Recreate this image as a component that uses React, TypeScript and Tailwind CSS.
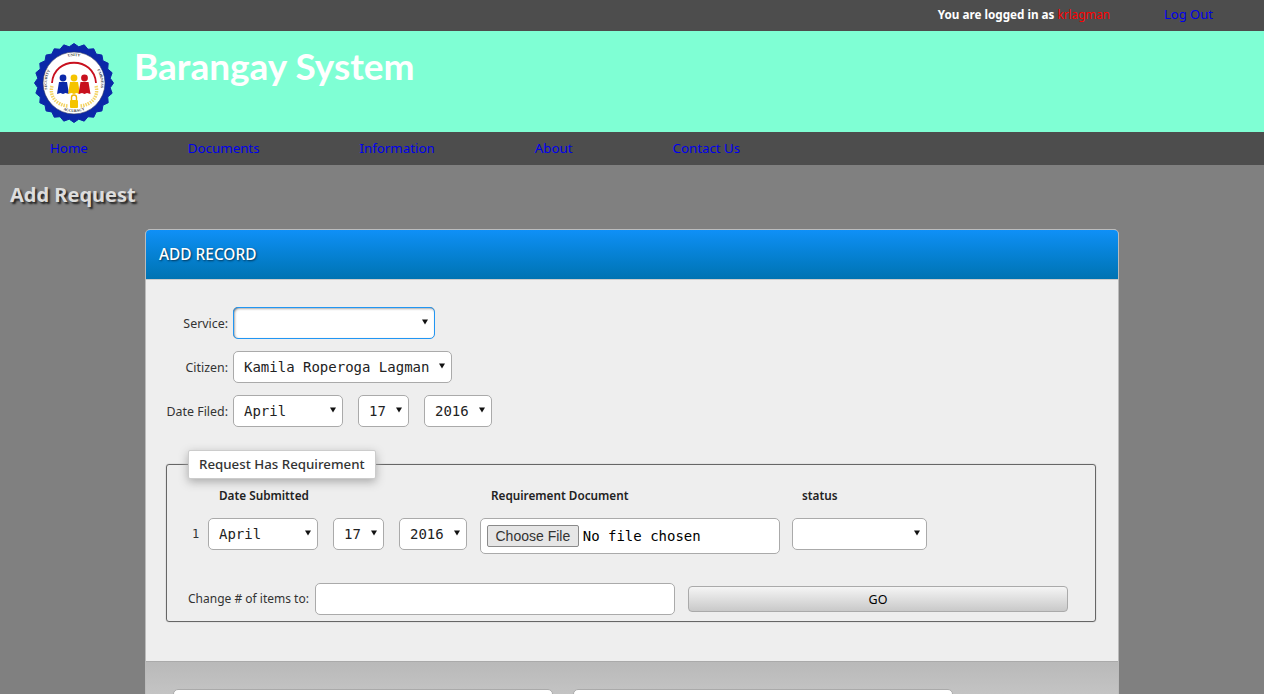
const NAV_LINKS = ["Home", "Documents", "Information", "About", "Contact Us"];
const MONTHS = ["April"];

// scalloped edge of the seal
const sealEdge = (() => {
  const points: string[] = [];
  const bumps = 24;
  for (let i = 0; i < bumps * 2; i++) {
    const angle = (i / (bumps * 2)) * Math.PI * 2;
    const r = i % 2 === 0 ? 39.5 : 36.5;
    points.push(`${(41 + r * Math.cos(angle)).toFixed(2)},${(40 + r * Math.sin(angle)).toFixed(2)}`);
  }
  return points.join(" ");
})();

const Seal = () => (
  <svg width="82" height="82" viewBox="0 0 82 80" className="block">
    <polygon points={sealEdge} fill="#0b28a8" stroke="#0b28a8" strokeWidth="1" strokeLinejoin="round" />
    <circle cx="41" cy="40" r="31" fill="#fff" stroke="#30395f" strokeWidth="0.6" />
    <defs>
      <path id="sealTop" d="M14 40a27 27 0 0 1 54 0" />
      <path id="sealBottom" d="M12 40a29 29 0 0 0 58 0" />
      <path id="sealLeft" d="M20 58a27 27 0 0 1 6-40" />
      <path id="sealRight" d="M56 18a27 27 0 0 1 7 38" />
    </defs>
    <g fontFamily="'Liberation Serif', serif" fontSize="3.800" fontWeight="700" fill="#333">
      <text><textPath href="#sealTop" startOffset="50%" textAnchor="middle">UNITY</textPath></text>
      <text><textPath href="#sealBottom" startOffset="50%" textAnchor="middle">ACCURACY</textPath></text>
      <text><textPath href="#sealLeft" startOffset="50%" textAnchor="middle">SECURITY</textPath></text>
      <text><textPath href="#sealRight" startOffset="50%" textAnchor="middle">FAIRNESS</textPath></text>
    </g>
    <path d="M19 40C21 13 61 13 63 40" fill="none" stroke="#c8101e" strokeWidth="1.800" />
    <circle cx="30" cy="35" r="3.400" fill="#0b28a8" />
    <circle cx="41" cy="35" r="3.400" fill="#f5c400" />
    <circle cx="51.500" cy="35" r="3.400" fill="#c8101e" />
    <path d="M26 39h8l2 12-3.500-1-2.500 1-2.500-1-3.500 1z" fill="#0b28a8" />
    <path d="M37 39h8l2 12-3.500-1-2.500 1-2.500-1-3.500 1z" fill="#f5c400" />
    <path d="M47.500 39h8l2 12-3.500-1-2.500 1-2.500-1-3.500 1z" fill="#c8101e" />
    <path d="M19 43C16 54 24 62 35 63M63 43C66 54 58 62 47 63" fill="none" stroke="#f3d365" strokeWidth="3.400" strokeDasharray="1.500 1" />
    <path d="M38.500 57v-2.500a2.500 2.500 0 0 1 5 0V57" fill="none" stroke="#f0b400" strokeWidth="1.400" />
    <rect x="37" y="57" width="8" height="8" rx="1" fill="#f5c400" />
  </svg>
);

const Select = ({ value, className }: { value?: string; className: string }) => (
  <div className={`relative h-8 ${className}`}>
    <select
      className="h-full w-full appearance-none rounded-[5px] border border-[#aaaaaa] bg-white pl-[10px] font-['DejaVu_Sans_Mono',monospace] text-sm text-[#222222]"
      defaultValue={value}
    >
      {value ? <option>{value}</option> : <option></option>}
    </select>
    <svg width="6" height="6" viewBox="0 0 6 6" className="pointer-events-none absolute right-[7px] top-[12px]">
      <path d="M0 .5h6L3 5.500z" fill="#111111" />
    </svg>
  </div>
);

const DateSelects = () => (
  <>
    <Select value={MONTHS[0]} className="w-[110px]" />
    <Select value="17" className="ml-[15px] w-[51px]" />
    <Select value="2016" className="ml-[15px] w-[68px]" />
  </>
);

const FormLabel = ({ children }: { children: string }) => (
  <label className="w-[62px] shrink-0 whitespace-nowrap pt-[2px] text-right text-[12.4px] text-[#333333] [direction:rtl]">
    <bdi>{children}</bdi>
  </label>
);

export default function App() {
  return (
    <div className="h-[694px] overflow-hidden bg-[#808080] font-['Noto_Sans',sans-serif]">
      <div className="flex h-[31px] items-center justify-end bg-[#4d4d4d] pb-[2px] pr-[51px]">
        <span className="text-[11.7px] font-bold text-white">
          You are logged in as <span className="font-normal text-[#ff0000]">krlagman</span>
        </span>
        <a className="ml-[54px] text-[13px] text-[#0000ee]">Log Out</a>
      </div>

      <header className="flex h-[101px] items-start bg-[#7fffd4] pl-[33px] pt-[11px]">
        <Seal />
        <h1 className="ml-[19px] mt-[1px] font-['Lato',sans-serif] text-[37px] leading-[45px] font-bold whitespace-nowrap text-white">
          Barangay System
        </h1>
      </header>

      <nav className="flex h-[33px] items-center bg-[#4d4d4d]">
        {NAV_LINKS.map((link) => (
          <a key={link} className="px-[50px] text-[13.3px] text-[#0000ee]">
            {link}
          </a>
        ))}
      </nav>

      <h2 className="ml-[10px] mt-[16px] text-xl leading-[28px] font-bold text-[#dddddd] [text-shadow:2px_2px_2px_#222222]">
        Add Request
      </h2>

      <section className="ml-[145px] mt-[20px] w-[974px] rounded-t-[5px] border border-[#bbbbbb] bg-[#eeeeee]">
        <div className="flex h-[49px] items-center rounded-t-[4px] bg-gradient-to-b from-[#0f90f7] to-[#0073b2] pl-[13px] text-[15.4px] font-medium text-white [text-shadow:1px_1px_2px_#003355]">
          ADD RECORD
        </div>

        <div className="h-[382px] border-t border-[#cccccc] pl-[20px] pt-[27px]">
          <div className="flex items-center gap-[5px]">
            <FormLabel>Service:</FormLabel>
            <Select className="w-[202px] rounded-[5px] bg-white shadow-[inset_1px_1px_3px_#555555] [&>select]:border-[#2196f3] [&>select]:bg-transparent" />
          </div>
          <div className="mt-3 flex items-center gap-[5px]">
            <FormLabel>Citizen:</FormLabel>
            <Select value="Kamila Roperoga Lagman" className="w-[219px]" />
          </div>
          <div className="mt-3 flex items-center">
            <FormLabel>Date Filed:</FormLabel>
            <div className="ml-[5px] flex items-center">
              <DateSelects />
            </div>
          </div>

          <fieldset className="mt-[23px] h-[172px] w-[930px] rounded-[3px] border border-[#666666] pl-[21px] shadow-[0_0_1px_#888888]">
            <legend className="rounded-[2px] border border-[#cccccc] bg-white px-[10px] py-[4px] text-[13.3px] leading-[19px] font-medium text-[#333333] shadow-[0_3px_10px_#aaaaaa]">
              Request Has Requirement
            </legend>
            <div className="mt-[9px] flex h-4 items-center text-[11.75px] font-semibold text-[#222222]">
              <span className="ml-[31px] w-[272px]">Date Submitted</span>
              <span className="w-[311px]">Requirement Document</span>
              <span>status</span>
            </div>
            <div className="-ml-[21px] mt-[14px] flex items-start">
              <span className="ml-[25px] mr-[9px] mt-[8px] w-[7px] font-['DejaVu_Sans_Mono',monospace] text-xs text-[#333333]">1</span>
              <DateSelects />
              <div className="ml-[13px] flex h-9 w-[300px] items-center rounded-[5px] border border-[#aaaaaa] bg-white pl-[6px]">
                <input
                  type="file"
                  className="font-['DejaVu_Sans_Mono',monospace] text-sm text-black file:mr-1 file:h-[22px] file:rounded-[2px] file:border file:border-[#8a8a8a] file:bg-[#e6e6e6] file:px-[7.5px] file:font-['Liberation_Sans',sans-serif] file:text-sm file:text-[#333333]"
                />
              </div>
              <Select className="ml-3 w-[135px]" />
            </div>
            <div className="mt-[29px] flex items-center">
              <label className="w-[121px] text-xs whitespace-nowrap text-[#333333]">Change # of items to:</label>
              <input type="text" className="ml-[6px] h-8 w-[360px] rounded-[5px] border border-[#aaaaaa] bg-white" />
              <button
                type="button"
                className="ml-[13px] h-[26px] w-[380px] rounded-[4px] border border-[#aaaaaa] bg-gradient-to-b from-[#f5f5f5] to-[#c9c9c9] pt-[2px] text-[12.5px] text-black"
              >
                GO
              </button>
            </div>
          </fieldset>
        </div>

        <div className="flex h-[40px] gap-5 border-t border-[#aaaaaa] bg-gradient-to-b from-[#b9b9b9] to-[#c6c6c6] pl-[27px] pt-[27px]">
          <div className="h-8 w-[380px] rounded-[5px] border border-[#aaaaaa] bg-white"></div>
          <div className="h-8 w-[380px] rounded-[5px] border border-[#aaaaaa] bg-white"></div>
        </div>
      </section>
    </div>
  );
}
